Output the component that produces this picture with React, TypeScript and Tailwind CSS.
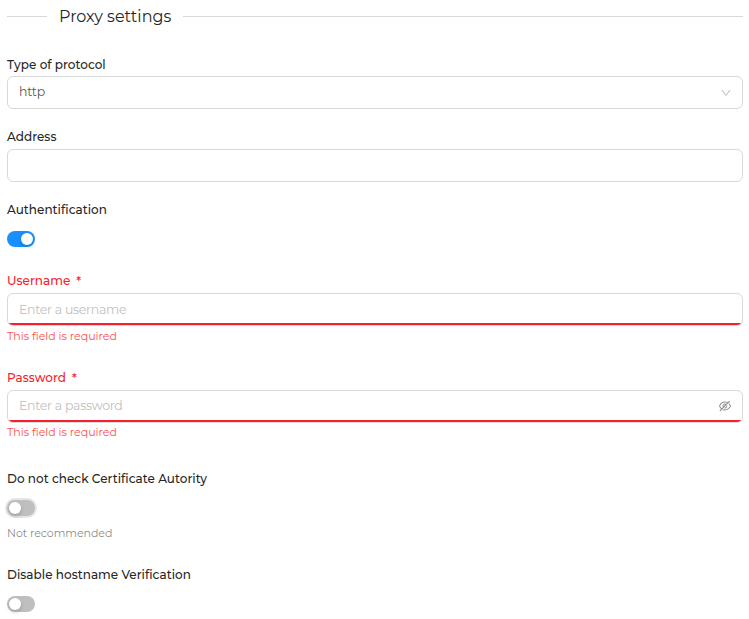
import type { ReactNode } from "react";
import { AiOutlineDown, AiOutlineEyeInvisible } from "react-icons/ai";

function Label({ children, className = "" }: { children: ReactNode; className?: string }) {
  return (
    <div className={`flex h-4 items-center whitespace-nowrap text-xs leading-4 font-medium tracking-[0.03px] ${className}`}>
      {children}
    </div>
  );
}

function Box({ children, invalid = false }: { children?: ReactNode; invalid?: boolean }) {
  return (
    <div
      className={`flex h-[33px] items-center justify-between rounded-[6px] border border-[#d9d9d9] px-[11px] ${
        invalid ? "bg-[linear-gradient(to_top,#f5222d_2px,#ffffff_2px)]" : "bg-white"
      }`}
    >
      {children}
    </div>
  );
}

function Toggle({ on = false, focused = false }: { on?: boolean; focused?: boolean }) {
  return (
    <div
      className={`flex h-4 w-7 items-center rounded-full px-0.5 ${
        on ? "justify-end bg-[#1890ff]" : "bg-[#bfbfbf]"
      } ${focused ? "shadow-[0_0_0_2px_rgba(0,0,0,0.1)]" : ""}`}
    >
      <div className="size-3 rounded-full bg-white shadow-[0_2px_4px_rgba(0,35,11,0.2)]" />
    </div>
  );
}

export default function App() {
  return (
    <div className="flex h-[619px] flex-col bg-white pl-[7px] pr-1.5 font-[Montserrat,Inter,sans-serif] text-[#262626]">
      <div className="flex h-8 items-center">
        <div className="h-px w-10 bg-[#d9d9d9]" />
        <div className="ml-3 w-28 whitespace-nowrap pt-0.5 text-base">Proxy settings</div>
        <div className="ml-3 h-px flex-1 bg-[#d9d9d9]" />
      </div>

      <div className="mt-[25px]">
        <Label className="mb-[3px]">Type of protocol</Label>
        <Box>
          <span className="pb-px text-[12.5px] leading-4 tracking-[-0.25px] text-[#595959]">http</span>
          <AiOutlineDown className="mr-[-1px] size-3 text-[#bfbfbf]" />
        </Box>
      </div>

      <div className="mt-5">
        <Label className="mb-1">Address</Label>
        <Box />
      </div>

      <div className="mt-5">
        <Label className="mb-[13px]">Authentification</Label>
        <Toggle on />
      </div>

      <div className="mt-[26px]">
        <Label className="mb-1 text-[#f5222d]">
          <span>Username</span>
          <span className="ml-1.5 pt-px">*</span>
        </Label>
        <Box invalid>
          <span className="text-[12.5px] leading-4 tracking-[-0.28px] text-[#bfbfbf]">Enter a username</span>
        </Box>
        <div className="mt-0.5 h-4 text-[11px] leading-4 text-[#ff4d4f]">This field is required</div>
      </div>

      <div className="mt-[26px]">
        <Label className="mb-1 text-[#f5222d]">
          <span>Password</span>
          <span className="ml-1.5 pt-px">*</span>
        </Label>
        <Box invalid>
          <span className="pb-0.5 text-[12.5px] leading-4 tracking-[-0.28px] text-[#bfbfbf]">Enter a password</span>
          <AiOutlineEyeInvisible className="mr-[-1px] mb-0.5 size-3.5 text-[#8c8c8c]" />
        </Box>
        <div className="mt-px h-4 text-[11px] leading-4 text-[#ff4d4f]">This field is required</div>
      </div>

      <div className="mt-[31px]">
        <Label className="mb-[13px]">Do not check Certificate Autority</Label>
        <Toggle focused />
        <div className="mt-[9px] h-4 text-[11px] leading-4 tracking-[-0.05px] text-[#8c8c8c]">Not recommended</div>
      </div>

      <div className="mt-[26px]">
        <Label className="mb-[13px]">Disable hostname Verification</Label>
        <Toggle />
      </div>
    </div>
  );
}
